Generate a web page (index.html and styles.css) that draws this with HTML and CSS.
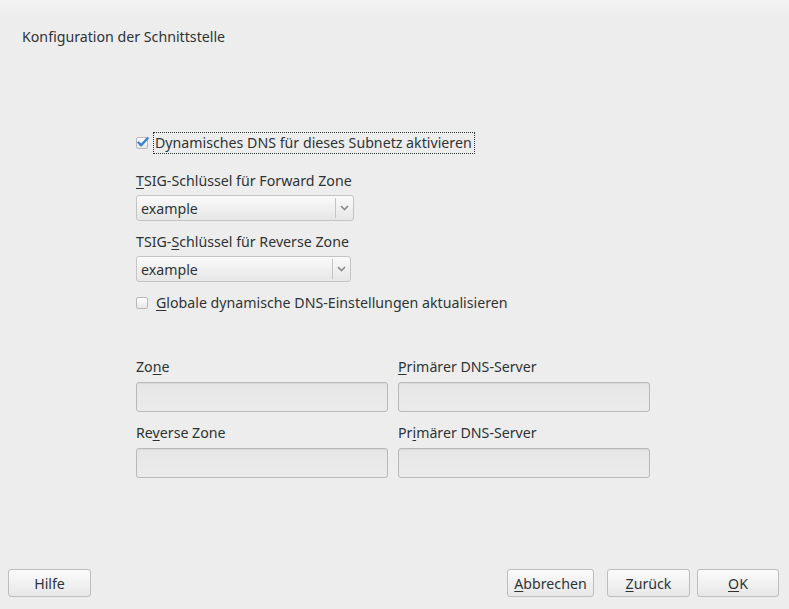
FILE: index.html
```html
<!DOCTYPE html>
<html>
<head>
<meta charset="utf-8">
<link rel="stylesheet" href="styles.css">
</head>
<body>
<div class="window">
  <div class="title">Konfiguration der Schnittstelle</div>
  <div class="content">
    <div class="form">
      <div class="check-row first">
        <span class="checkbox checked">
          <svg width="13" height="13" viewBox="0 0 13 13"><path d="M2.5 6.5 L5.2 9.3 L11.5 2.2" fill="none" stroke="#3d7fd3" stroke-width="2.4" stroke-linecap="round" stroke-linejoin="round"/></svg>
        </span>
        <span class="focus">Dynamisches DNS für dieses Subnetz aktivieren</span>
      </div>
      <div class="label l-fwd"><u>T</u>SIG-Schlüssel für Forward Zone</div>
      <div class="combo c1"><span class="combo-text">example</span><span class="combo-arrow"><svg width="9" height="6" viewBox="0 0 9 6"><path d="M1 1 L4.5 4.5 L8 1" fill="none" stroke="#8a8a8a" stroke-width="1.6"/></svg></span></div>
      <div class="label l-rev">TSIG-<u>S</u>chlüssel für Reverse Zone</div>
      <div class="combo c2"><span class="combo-text">example</span><span class="combo-arrow"><svg width="9" height="6" viewBox="0 0 9 6"><path d="M1 1 L4.5 4.5 L8 1" fill="none" stroke="#8a8a8a" stroke-width="1.6"/></svg></span></div>
      <div class="check-row second">
        <span class="checkbox"></span>
        <span class="check-label"><u>G</u>lobale dynamische DNS-Einstellungen aktualisieren</span>
      </div>
      <div class="grid">
        <div class="label">Zo<u>n</u>e</div>
        <div class="label"><u>P</u>rimärer DNS-Server</div>
        <div class="entry"></div>
        <div class="entry"></div>
        <div class="label g2">Re<u>v</u>erse Zone</div>
        <div class="label g2">Pr<u>i</u>märer DNS-Server</div>
        <div class="entry"></div>
        <div class="entry"></div>
      </div>
    </div>
  </div>
  <div class="buttons">
    <button class="btn help">Hilfe</button>
    <div class="spacer"></div>
    <button class="btn abort"><u>A</u>bbrechen</button>
    <button class="btn back"><u>Z</u>urück</button>
    <button class="btn ok"><u>O</u>K</button>
  </div>
</div>
</body>
</html>
```
FILE: styles.css
```css
html, body {
  margin: 0;
  padding: 0;
}
body {
  width: 789px;
  height: 609px;
  background: linear-gradient(#f3f3f3 0px, #ededed 16px, #ededed 100%);
  font-family: "Noto Sans", "DejaVu Sans", sans-serif;
  font-size: 14.2px;
  color: #2e3436;
  overflow: hidden;
}
u {
  text-decoration: underline;
  text-underline-offset: 2px;
}
.window {
  height: 609px;
  display: flex;
  flex-direction: column;
}
.title {
  padding: 27px 0 0 22px;
  height: 20px;
  line-height: 20px;
}
.content {
  flex: 1;
  padding-left: 136px;
}
.form {
  padding-top: 85px;
}
.check-row {
  display: flex;
  align-items: center;
  height: 22px;
}
.checkbox {
  width: 12px;
  height: 12px;
  border: 1px solid #b8b8b8;
  border-radius: 2px;
  background: linear-gradient(#ffffff, #e8e8e8);
  box-sizing: border-box;
  position: relative;
  flex: none;
}
.checkbox svg {
  position: absolute;
  left: -1px;
  top: -2px;
}
.focus {
  margin-left: 5px;
  border: 1px dotted #2e3436;
  padding: 0 2px 0 1px;
  line-height: 20px;
}
.check-label {
  margin-left: 8px;
  line-height: 20px;
}
.label {
  line-height: 20px;
}
.l-fwd {
  margin-top: 17px;
}
.combo {
  margin-top: 4px;
  height: 26px;
  box-sizing: border-box;
  border: 1px solid #c4c4c4;
  border-radius: 3px;
  background: linear-gradient(#fafafa, #e6e6e6);
  display: flex;
  align-items: center;
}
.c1 { width: 218px; }
.c2 { width: 215px; }
.combo-text {
  flex: 1;
  padding-left: 4px;
  color: #2e3436;
}
.combo-arrow {
  width: 17px;
  height: 20px;
  border-left: 1px solid #c4c4c4;
  display: flex;
  align-items: center;
  justify-content: center;
}
.l-rev {
  margin-top: 11px;
}
.second {
  margin-top: 10px;
}
.grid {
  margin-top: 43px;
  display: grid;
  grid-template-columns: 252px 252px;
  column-gap: 10px;
}
.grid .label {
  line-height: 20px;
  height: 20px;
}
.grid .g2 {
  margin-top: 11px;
}
.entry {
  margin-top: 5px;
  height: 30px;
  box-sizing: border-box;
  border: 1px solid #b9b9b9;
  border-radius: 3px;
  background: linear-gradient(#e6e6e6, #ebebeb);
  box-shadow: inset 0 1px 1px rgba(0,0,0,0.06);
}
.buttons {
  display: flex;
  padding: 0 10px 12px 8px;
}
.spacer { flex: 1; }
.btn {
  height: 28px;
  box-sizing: border-box;
  border: 1px solid #bdbdbd;
  border-radius: 3px;
  background: linear-gradient(#fbfbfb, #e7e7e7);
  font-family: inherit;
  font-size: 14.2px;
  color: #2e3436;
  padding: 0;
}
.help { width: 83px; }
.abort { width: 87px; }
.back { width: 83px; margin-left: 13px; }
.ok { width: 82px; margin-left: 7px; }
```
